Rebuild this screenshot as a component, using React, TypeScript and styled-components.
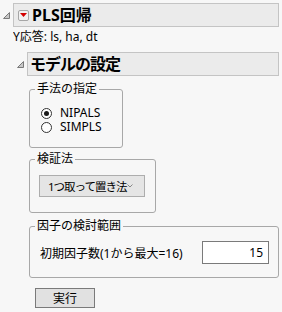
import React from 'react';
import styled, { createGlobalStyle } from 'styled-components';

const Global = createGlobalStyle`
  html, body { margin: 0; padding: 0; background: #f7f7f7; }
  body {
    font-family: "Segoe UI", "Noto Sans", "Noto Sans CJK JP", sans-serif;
    font-size: 12px;
    color: #000;
  }
`;

const Page = styled.div`
  width: 282px;
  box-sizing: border-box;
  padding: 3px 3px 0 3px;
`;

const Node = styled.div<{ $indent?: number; $top?: number }>`
  margin-left: ${(p) => p.$indent ?? 0}px;
  margin-top: ${(p) => p.$top ?? 0}px;
`;

const NodeRow = styled.div`
  display: flex;
  align-items: center;
  height: 24px;
`;

const Toggle = styled.div`
  width: 10px;
  flex: none;
  display: flex;
  align-items: center;
  padding-top: 1px;
`;

const HeaderBox = styled.div<{ $pad: number }>`
  flex: 1;
  height: 24px;
  box-sizing: border-box;
  background: #ebebeb;
  border: 1px solid #c4c4c4;
  display: flex;
  align-items: center;
  gap: 3px;
  padding-left: ${(p) => p.$pad}px;
  overflow: hidden;
`;

const Title = styled.span<{ $ls?: number }>`
  font-weight: bold;
  font-size: 16px;
  line-height: 20px;
  letter-spacing: ${(p) => p.$ls ?? 0}px;
  white-space: nowrap;
`;

const MenuButton = styled.div`
  width: 11px;
  height: 11px;
  box-sizing: border-box;
  border: 1px solid #a6a6a6;
  border-radius: 2px;
  background: #f2f2f2;
  display: flex;
  align-items: center;
  justify-content: center;
`;

const Body = styled.div<{ $pad: number; $top?: number }>`
  padding-left: ${(p) => p.$pad}px;
  padding-top: ${(p) => p.$top ?? 0}px;
`;

const Note = styled.div`
  height: 16px;
  line-height: 16px;
  margin-top: 2px;
  white-space: nowrap;
  overflow: hidden;
`;

const Group = styled.fieldset<{ $w: number; $pt: number; $pb: number; $top: number }>`
  width: ${(p) => p.$w}px;
  box-sizing: border-box;
  margin: ${(p) => p.$top}px 0 0 0;
  border: 1px solid #a8a8a8;
  border-radius: 3px;
  padding: ${(p) => p.$pt}px 9px ${(p) => p.$pb}px 10px;
  min-width: 0;
`;

const Legend = styled.legend`
  padding: 0 2px;
  margin-left: -5px;
  height: 14px;
  line-height: 14px;
  white-space: nowrap;
`;

const RadioRow = styled.label`
  display: flex;
  align-items: center;
  height: 14px;
  line-height: 14px;
  gap: 8px;
  padding-left: 1px;
  white-space: nowrap;
`;

const RadioCircle = styled.span<{ $on: boolean }>`
  width: 11px;
  height: 11px;
  flex: none;
  box-sizing: border-box;
  border-radius: 50%;
  border: 1px solid #333;
  background: #fff;
  display: flex;
  align-items: center;
  justify-content: center;
  &::after {
    content: '';
    width: 5px;
    height: 5px;
    border-radius: 50%;
    background: ${(p) => (p.$on ? '#1a1a1a' : 'transparent')};
  }
`;

const Select = styled.div`
  width: 106px;
  height: 22px;
  box-sizing: border-box;
  margin-left: -1px;
  background: #e5e5e5;
  border: 1px solid #adadad;
  display: flex;
  align-items: center;
  justify-content: space-between;
  padding: 0 11px 0 8px;
`;

const SelectText = styled.span`
  white-space: nowrap;
  font-size: 11.5px;
  letter-spacing: -1px;
`;

const FieldRow = styled.div`
  display: flex;
  align-items: center;
  justify-content: space-between;
  white-space: nowrap;
`;

const NumberBox = styled.div`
  width: 67px;
  height: 23px;
  flex: none;
  box-sizing: border-box;
  background: #fff;
  border: 1px solid #7a7a7a;
  display: flex;
  align-items: center;
  justify-content: flex-end;
  padding-right: 5px;
`;

const RunButton = styled.button`
  margin: 10px 0 0 6px;
  width: 60px;
  height: 20px;
  box-sizing: border-box;
  background: #e1e1e1;
  border: 1px solid #7a7a7a;
  border-radius: 0;
  font: inherit;
  color: #000;
  padding: 0;
  display: flex;
  align-items: center;
  justify-content: center;
`;

const Corner = () => (
  <svg width="7" height="7" viewBox="0 0 7 7">
    <polygon points="6.5,0.5 6.5,6.5 0.5,6.5" fill="#c8c8c8" stroke="#7a7a7a" strokeWidth="1" />
  </svg>
);

const RedDown = () => (
  <svg width="7" height="4" viewBox="0 0 7 4">
    <polygon points="0,0 7,0 3.5,4" fill="#d40000" />
  </svg>
);

const Chevron = () => (
  <svg width="6" height="4" viewBox="0 0 6 4">
    <polyline points="0.5,0.5 3,3 5.5,0.5" fill="none" stroke="#888" strokeWidth="1" />
  </svg>
);

export default function App() {
  return (
    <>
      <Global />
      <Page>
        <Node>
          <NodeRow>
            <Toggle><Corner /></Toggle>
            <HeaderBox $pad={4}>
              <MenuButton><RedDown /></MenuButton>
              <Title>PLS回帰</Title>
            </HeaderBox>
          </NodeRow>
          <Body $pad={10}>
            <Note>Y応答: ls, ha, dt</Note>
            <Node $indent={4} $top={7}>
              <NodeRow>
                <Toggle><Corner /></Toggle>
                <HeaderBox $pad={2}>
                  <Title $ls={-1}>モデルの設定</Title>
                </HeaderBox>
              </NodeRow>
              <Body $pad={12} $top={6}>
                <Group $w={94} $pt={10} $pb={13} $top={0}>
                  <Legend>手法の指定</Legend>
                  <RadioRow><RadioCircle $on={true} />NIPALS</RadioRow>
                  <RadioRow><RadioCircle $on={false} />SIMPLS</RadioRow>
                </Group>
                <Group $w={127} $pt={9} $pb={15} $top={4}>
                  <Legend>検証法</Legend>
                  <Select>
                    <SelectText>1つ取って置き法</SelectText>
                    <Chevron />
                  </Select>
                </Group>
                <Group $w={250} $pt={8} $pb={13} $top={6}>
                  <Legend>因子の検討範囲</Legend>
                  <FieldRow>
                    <span>初期因子数(1から最大=16)</span>
                    <NumberBox>15</NumberBox>
                  </FieldRow>
                </Group>
                <RunButton>実行</RunButton>
              </Body>
            </Node>
          </Body>
        </Node>
      </Page>
    </>
  );
}
